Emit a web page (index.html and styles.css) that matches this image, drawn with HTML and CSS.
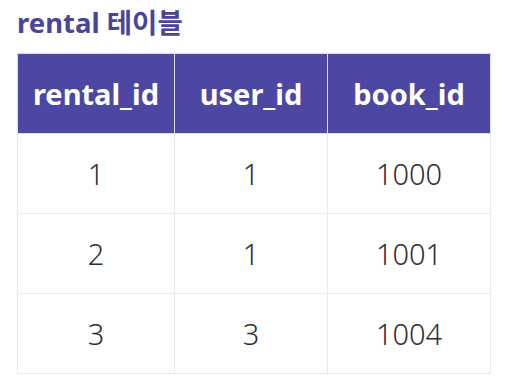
FILE: index.html
```html
<!DOCTYPE html>
<html lang="ko">
<head>
<meta charset="utf-8">
<link rel="stylesheet" href="styles.css">
</head>
<body>
<div class="page">
  <h2 class="title">rental 테이블</h2>
  <table class="data">
    <thead>
      <tr><th>rental_id</th><th>user_id</th><th>book_id</th></tr>
    </thead>
    <tbody>
      <tr><td>1</td><td>1</td><td>1000</td></tr>
      <tr><td>2</td><td>1</td><td>1001</td></tr>
      <tr><td>3</td><td>3</td><td>1004</td></tr>
    </tbody>
  </table>
</div>
</body>
</html>
```
FILE: styles.css
```css
html, body {
  margin: 0;
  padding: 0;
  background: #ffffff;
}
.page {
  padding: 3px 15px 0 17px;
  font-family: "Noto Sans", "Noto Sans CJK KR", sans-serif;
}
.title {
  margin: 0 0 10px 0;
  font-size: 27.5px;
  line-height: 40px;
  font-weight: 700;
  color: #4a4599;
}
.data {
  border-collapse: collapse;
  width: 474px;
}
.data th {
  background: #4b47a3;
  color: #ffffff;
  font-size: 29px;
  font-weight: 700;
  height: 79px;
  padding: 0;
  border: 1px solid #dcdbe8;
}
.data td {
  text-align: center;
  font-size: 29px;
  font-weight: 300;
  color: #2f2f33;
  height: 79px;
  padding: 0;
  border: 1px solid #ebeaef;
}
.data th:nth-child(1), .data td:nth-child(1) { width: 156px; }
.data th:nth-child(2), .data td:nth-child(2) { width: 152px; }
```
